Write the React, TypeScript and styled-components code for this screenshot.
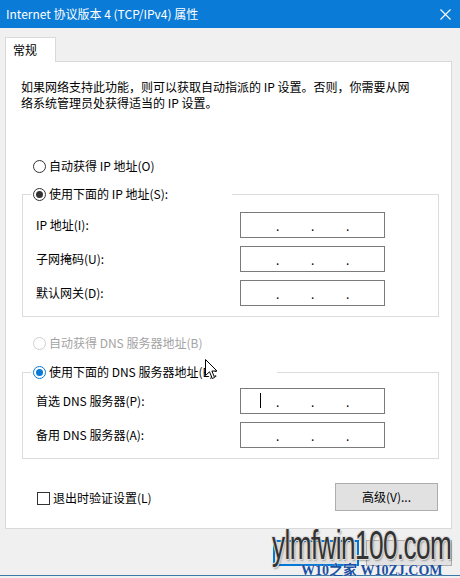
import styled, { createGlobalStyle } from 'styled-components'

const GlobalStyle = createGlobalStyle`
  html, body {
    margin: 0;
    padding: 0;
    background: #f0f0f0;
  }
  body {
    font-family: "Noto Sans CJK SC", "Microsoft YaHei", "Liberation Sans", sans-serif;
    font-size: 12px;
    color: #000;
  }
  * {
    box-sizing: border-box;
  }
`

const Window = styled.div`
  position: relative;
  width: 460px;
  height: 576px;
  background: #f0f0f0;
  border-bottom: 1px solid #3a78a6;
  display: flex;
  flex-direction: column;
`

const TitleBar = styled.header`
  height: 28px;
  background: #0a7bd6;
  color: #fff;
  display: flex;
  align-items: center;
  justify-content: space-between;
  padding: 0 9px 0 6px;
  line-height: 16px;
`

const Body = styled.div`
  padding: 9px 8px 0 5px;
`

const TabStrip = styled.div`
  display: flex;
  height: 24px;
`

const Tab = styled.div`
  position: relative;
  z-index: 1;
  width: 51px;
  height: 25px;
  background: #fff;
  border: 1px solid #d9d9d9;
  border-bottom: none;
  padding: 4px 0 0 7px;
  line-height: 16px;
`

const Panel = styled.section`
  height: 468px;
  background: #fff;
  border: 1px solid #d9d9d9;
  padding: 17px 12px 0 15px;
  display: flex;
  flex-direction: column;
`

const Description = styled.p`
  margin: 0;
  line-height: 16px;
  white-space: nowrap;
`

const RadioRow = styled.label<{ $top: number; $disabled?: boolean }>`
  display: flex;
  align-items: center;
  height: 16px;
  margin: ${(p) => p.$top}px 0 0 12px;
  gap: 3px;
  line-height: 16px;
  color: ${(p) => (p.$disabled ? '#a3a3a3' : '#000')};
  white-space: nowrap;
`

const Radio = styled.span<{ $checked?: boolean; $accent?: boolean; $disabled?: boolean }>`
  position: relative;
  flex: none;
  width: 13px;
  height: 13px;
  border-radius: 50%;
  background: #fff;
  border: 1px solid
    ${(p) => (p.$disabled ? '#cfcfcf' : p.$accent ? '#0a78d4' : '#333')};

  &::after {
    content: '';
    display: ${(p) => (p.$checked ? 'block' : 'none')};
    position: absolute;
    left: 2px;
    top: 2px;
    width: 7px;
    height: 7px;
    border-radius: 50%;
    background: ${(p) => (p.$accent ? '#0a78d4' : '#333')};
  }
`

const Group = styled.fieldset<{ $top: number; $padTop: number }>`
  margin: ${(p) => p.$top}px 0 0 1px;
  width: 417px;
  padding: ${(p) => p.$padTop}px 0 10px 13px;
  border: 1px solid #dcdcdc;
  min-width: 0;
`

const Legend = styled.legend<{ $width: number }>`
  margin-left: -5px;
  padding: 0 0 0 2px;
  width: ${(p) => p.$width}px;
  height: 16px;
  line-height: 16px;
  display: flex;
  align-items: center;
  gap: 3px;
  white-space: nowrap;
`

const Fields = styled.div`
  display: grid;
  grid-template-columns: 204px 145px;
  row-gap: 8px;
  align-items: center;
`

const FieldLabel = styled.span`
  line-height: 16px;
  white-space: nowrap;
`

const IpField = styled.div`
  position: relative;
  height: 26px;
  border: 1px solid #7a7a7a;
  background: #fff;
  display: flex;
  align-items: center;
  padding: 2px 0 0 35px;
  gap: 32px;
`

const Dot = styled.span`
  width: 3px;
  text-align: center;
  line-height: 16px;
`

const Caret = styled.span`
  position: absolute;
  left: 19px;
  top: 4px;
  width: 1px;
  height: 15px;
  background: #000;
`

const Footer = styled.div`
  display: flex;
  align-items: center;
  justify-content: space-between;
  margin: 24px 1px 0 16px;
`

const CheckRow = styled.label`
  display: flex;
  align-items: center;
  gap: 3px;
  line-height: 16px;
  margin-top: 2px;
`

const Checkbox = styled.span`
  width: 13px;
  height: 13px;
  border: 1px solid #333;
  background: #fff;
`

const Button = styled.button<{ $default?: boolean; $width: number; $height: number }>`
  width: ${(p) => p.$width}px;
  height: ${(p) => p.$height}px;
  background: #e1e1e1;
  border: 1px solid ${(p) => (p.$default ? '#0078d7' : '#adadad')};
  box-shadow: ${(p) => (p.$default ? 'inset 0 0 0 1px #0078d7' : 'none')};
  font: inherit;
  color: #000;
  padding: 0;
  line-height: 16px;
`

const DialogButtons = styled.div`
  display: flex;
  justify-content: flex-end;
  gap: 7px;
  margin-top: 11px;
`

const Watermark = styled.div`
  position: absolute;
  left: 272px;
  top: 523px;
  font-family: "Liberation Sans", Arial, sans-serif;
  font-size: 41px;
  line-height: 44px;
  letter-spacing: -1px;
  color: #333;
  transform: scaleX(0.64);
  transform-origin: left top;
  white-space: nowrap;
  text-shadow: -1px -1px 0 #ddd, 1px -1px 0 #ddd, -1px 1px 0 #ddd, 1px 1px 0 #ddd,
    2px 2px 2px rgba(0, 0, 0, 0.3);
`

const SiteMark = styled.div`
  position: absolute;
  left: 301px;
  top: 564px;
  font-family: "Liberation Serif", "Noto Sans CJK SC", serif;
  font-weight: bold;
  font-size: 14px;
  line-height: 13px;
  color: #1b4f9f;
  white-space: nowrap;
  text-shadow: 0 0 1px #fff;
`

const Pointer = styled.svg`
  position: absolute;
  left: 205px;
  top: 359px;
`

const ipRows = ['IP 地址(I):', '子网掩码(U):', '默认网关(D):']
const dnsRows = ['首选 DNS 服务器(P):', '备用 DNS 服务器(A):']

const IpInput = ({ caret }: { caret?: boolean }) => (
  <IpField>
    {caret && <Caret />}
    <Dot>.</Dot>
    <Dot>.</Dot>
    <Dot>.</Dot>
  </IpField>
)

export default function App() {
  return (
    <Window>
      <GlobalStyle />
      <TitleBar>
        <span>Internet 协议版本 4 (TCP/IPv4) 属性</span>
        <svg width="11" height="11" viewBox="0 0 11 11">
          <path d="M0.5 0.5 L10.5 10.5 M10.5 0.5 L0.5 10.5" stroke="#fff" strokeWidth="1.1" />
        </svg>
      </TitleBar>

      <Body>
        <TabStrip>
          <Tab>常规</Tab>
        </TabStrip>
        <Panel>
          <Description>
            如果网络支持此功能，则可以获取自动指派的 IP 设置。否则，你需要从网
            <br />
            络系统管理员处获得适当的 IP 设置。
          </Description>

          <RadioRow $top={47}>
            <Radio />
            自动获得 IP 地址(O)
          </RadioRow>

          <Group $top={12} $padTop={10}>
            <Legend $width={201}>
              <Radio $checked />
              使用下面的 IP 地址(S):
            </Legend>
            <Fields>
              {ipRows.map((label) => [
                <FieldLabel key={label}>{label}</FieldLabel>,
                <IpInput key={label + '-f'} />,
              ])}
            </Fields>
          </Group>

          <RadioRow $top={18} $disabled>
            <Radio $disabled />
            自动获得 DNS 服务器地址(B)
          </RadioRow>

          <Group $top={13} $padTop={8}>
            <Legend $width={246}>
              <Radio $checked $accent />
              使用下面的 DNS 服务器地址(E):
            </Legend>
            <Fields>
              {dnsRows.map((label, i) => [
                <FieldLabel key={label}>{label}</FieldLabel>,
                <IpInput key={label + '-f'} caret={i === 0} />,
              ])}
            </Fields>
          </Group>

          <Footer>
            <CheckRow>
              <Checkbox />
              退出时验证设置(L)
            </CheckRow>
            <Button $width={103} $height={28}>高级(V)...</Button>
          </Footer>
        </Panel>

        {/* OK / Cancel sit under the site watermark, their labels are hidden by it */}
        <DialogButtons>
          <Button $width={86} $height={26} $default aria-label="确定" />
          <Button $width={86} $height={26} aria-label="取消" />
        </DialogButtons>
      </Body>

      <Pointer width="14" height="21" viewBox="0 0 14 21">
        <path
          d="M0.5 0.5 L0.5 16.5 L4.5 12.8 L7.3 19.5 L9.6 18.5 L6.9 12 L12 12 Z"
          fill="#fff"
          stroke="#000"
          strokeWidth="1"
          strokeLinejoin="round"
        />
      </Pointer>
      <Watermark>ylmfwin100.com</Watermark>
      <SiteMark>W10之家 W10ZJ.COM</SiteMark>
    </Window>
  )
}
